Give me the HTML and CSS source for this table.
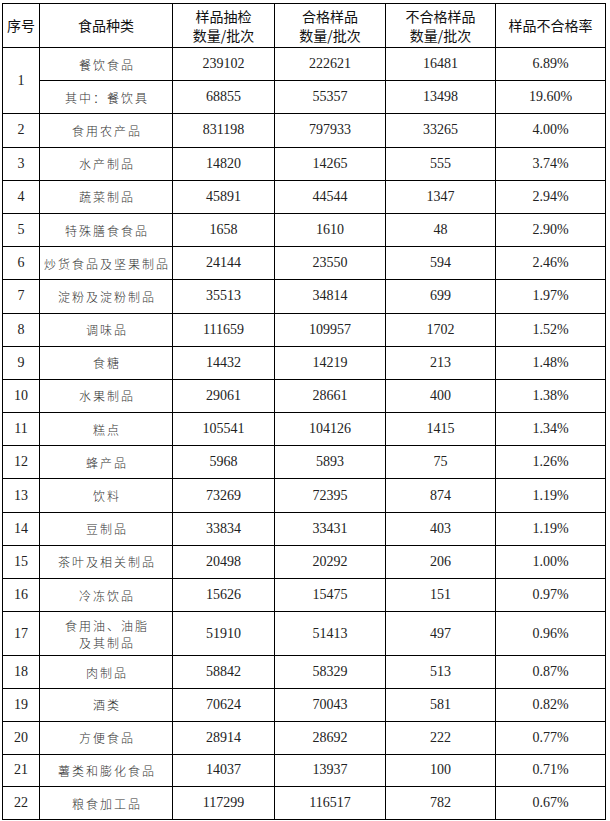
FILE: index.html
```html
<!DOCTYPE html>
<html lang="zh-CN">
<head>
<meta charset="utf-8">
<title>食品抽检情况</title>
<link rel="stylesheet" href="styles.css">
</head>
<body>
<table class="sheet">
  <colgroup>
    <col class="c-no">
    <col class="c-kind">
    <col class="c-total">
    <col class="c-pass">
    <col class="c-fail">
    <col class="c-rate">
  </colgroup>
  <thead>
    <tr class="head">
      <th>序号</th>
      <th>食品种类</th>
      <th>样品抽检<br>数量/批次</th>
      <th>合格样品<br>数量/批次</th>
      <th>不合格样品<br>数量/批次</th>
      <th>样品不合格率</th>
    </tr>
  </thead>
  <tbody>
    <tr><td class="no" rowspan="2">1</td><td class="kind">餐饮食品</td><td>239102</td><td>222621</td><td>16481</td><td>6.89%</td></tr>
    <tr><td class="kind">其中：餐饮具</td><td>68855</td><td>55357</td><td>13498</td><td>19.60%</td></tr>
    <tr><td class="no">2</td><td class="kind">食用农产品</td><td>831198</td><td>797933</td><td>33265</td><td>4.00%</td></tr>
    <tr><td class="no">3</td><td class="kind">水产制品</td><td>14820</td><td>14265</td><td>555</td><td>3.74%</td></tr>
    <tr><td class="no">4</td><td class="kind">蔬菜制品</td><td>45891</td><td>44544</td><td>1347</td><td>2.94%</td></tr>
    <tr><td class="no">5</td><td class="kind">特殊膳食食品</td><td>1658</td><td>1610</td><td>48</td><td>2.90%</td></tr>
    <tr><td class="no">6</td><td class="kind">炒货食品及坚果制品</td><td>24144</td><td>23550</td><td>594</td><td>2.46%</td></tr>
    <tr><td class="no">7</td><td class="kind">淀粉及淀粉制品</td><td>35513</td><td>34814</td><td>699</td><td>1.97%</td></tr>
    <tr><td class="no">8</td><td class="kind">调味品</td><td>111659</td><td>109957</td><td>1702</td><td>1.52%</td></tr>
    <tr><td class="no">9</td><td class="kind">食糖</td><td>14432</td><td>14219</td><td>213</td><td>1.48%</td></tr>
    <tr><td class="no">10</td><td class="kind">水果制品</td><td>29061</td><td>28661</td><td>400</td><td>1.38%</td></tr>
    <tr><td class="no">11</td><td class="kind">糕点</td><td>105541</td><td>104126</td><td>1415</td><td>1.34%</td></tr>
    <tr><td class="no">12</td><td class="kind">蜂产品</td><td>5968</td><td>5893</td><td>75</td><td>1.26%</td></tr>
    <tr><td class="no">13</td><td class="kind">饮料</td><td>73269</td><td>72395</td><td>874</td><td>1.19%</td></tr>
    <tr><td class="no">14</td><td class="kind">豆制品</td><td>33834</td><td>33431</td><td>403</td><td>1.19%</td></tr>
    <tr><td class="no">15</td><td class="kind">茶叶及相关制品</td><td>20498</td><td>20292</td><td>206</td><td>1.00%</td></tr>
    <tr><td class="no">16</td><td class="kind">冷冻饮品</td><td>15626</td><td>15475</td><td>151</td><td>0.97%</td></tr>
    <tr class="tall"><td class="no">17</td><td class="kind">食用油、油脂<br>及其制品</td><td>51910</td><td>51413</td><td>497</td><td>0.96%</td></tr>
    <tr class="low"><td class="no">18</td><td class="kind">肉制品</td><td>58842</td><td>58329</td><td>513</td><td>0.87%</td></tr>
    <tr class="low"><td class="no">19</td><td class="kind">酒类</td><td>70624</td><td>70043</td><td>581</td><td>0.82%</td></tr>
    <tr class="low"><td class="no">20</td><td class="kind">方便食品</td><td>28914</td><td>28692</td><td>222</td><td>0.77%</td></tr>
    <tr class="low"><td class="no">21</td><td class="kind">薯类和膨化食品</td><td>14037</td><td>13937</td><td>100</td><td>0.71%</td></tr>
    <tr class="low"><td class="no">22</td><td class="kind">粮食加工品</td><td>117299</td><td>116517</td><td>782</td><td>0.67%</td></tr>
  </tbody>
</table>
</body>
</html>
```

FILE: styles.css
```css
html, body {
  margin: 0;
  padding: 0;
  background: #ffffff;
}

body {
  padding: 3px 0 0 2px;
}

.sheet {
  border-collapse: collapse;
  table-layout: fixed;
  width: 604px;
  font-family: "Liberation Serif", "Noto Sans CJK SC", serif;
  font-size: 14px;
  color: #222;
}

.c-no { width: 37px; }
.c-kind { width: 133px; }
.c-total { width: 102px; }
.c-pass { width: 111px; }
.c-fail { width: 110px; }
.c-rate { width: 110px; }

.sheet th,
.sheet td {
  border: 1px solid #000;
  padding: 0;
  text-align: center;
  vertical-align: middle;
  white-space: nowrap;
}

.sheet tbody tr {
  height: 33.2px;
}

.sheet tbody tr.tall {
  height: 44px;
}

.sheet tbody tr.low {
  height: 32.8px;
}

.head {
  height: 44px;
}

.head th {
  font-family: "Noto Sans CJK SC", sans-serif;
  font-weight: 400;
  font-size: 14px;
  line-height: 19px;
  color: #111;
}

.sheet td.kind {
  font-family: "Noto Sans CJK SC", sans-serif;
  font-weight: 300;
  font-size: 12px;
  letter-spacing: 2px;
  line-height: 17px;
  color: #333;
  padding-left: 2px;
}
```
